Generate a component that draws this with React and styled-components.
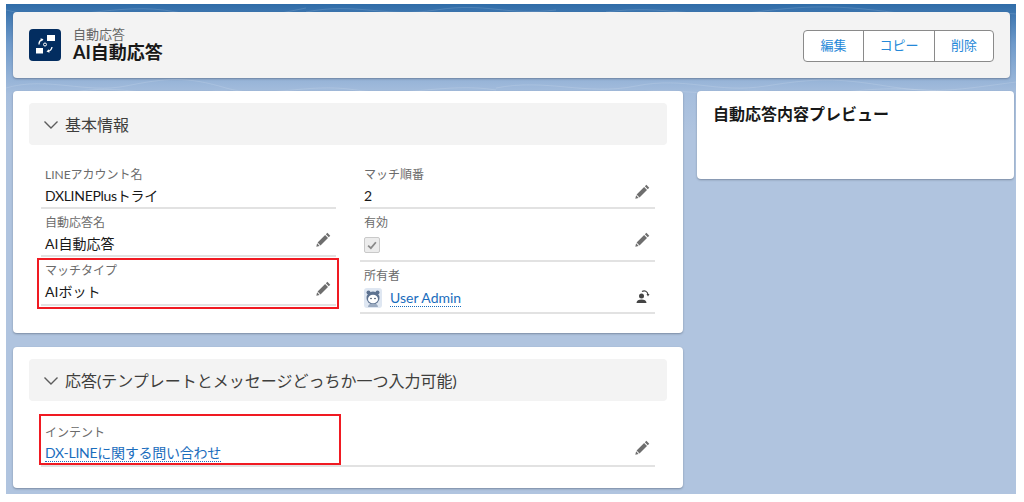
import React from "react"
import styled, { createGlobalStyle } from "styled-components"

const GlobalStyle = createGlobalStyle`
  html, body {
    margin: 0;
    padding: 0;
    height: 502px;
    overflow: hidden;
    background: #fff;
  }
  body {
    font-family: "Lato", "Noto Sans CJK JP", "Noto Sans", sans-serif;
    color: #181818;
  }
`

const Page = styled.div`
  position: relative;
  width: 1010px;
  height: 490px;
  margin: 4px 0 0 6px;
  padding: 8px 0 0 7px;
  box-sizing: border-box;
  overflow: hidden;
  background: linear-gradient(#2f6ca8 0, #6f9aca 40px, #a6bedd 90px, #b0c4df 130px);
  display: flex;
  flex-direction: column;
  gap: 13px;
`

const Contours = styled.svg`
  position: absolute;
  left: 0;
  top: 0;
`

const Card = styled.div`
  position: relative;
  background: ${(p) => p.$bg || "#fff"};
  border-radius: 4px;
  box-shadow: 0 1px 2px rgba(60, 70, 90, 0.45);
`

const Header = styled(Card)`
  width: 997px;
  height: 66px;
  padding: 0 16px;
  box-sizing: border-box;
  display: flex;
  align-items: center;
  justify-content: space-between;
`

const TitleArea = styled.div`
  display: flex;
  align-items: center;
  gap: 12px;
`

const LogoBox = styled.div`
  width: 32px;
  height: 32px;
  border-radius: 4px;
  background: #032d60;
  display: flex;
  align-items: center;
  justify-content: center;
`

const Titles = styled.div`
  display: flex;
  flex-direction: column;
`

const Crumb = styled.span`
  font-size: 13px;
  line-height: 14px;
  color: #666;
`

const Title = styled.span`
  font-size: 18px;
  line-height: 22px;
  font-weight: 700;
  color: #181818;
`

const ButtonGroup = styled.div`
  display: flex;
  height: 32px;
  margin-top: 2px;
  background: #fff;
  border: 1px solid #8a8a8a;
  border-radius: 4px;
  box-sizing: border-box;
`

const GroupButton = styled.button`
  width: ${(p) => p.$w}px;
  padding: 0 0 2px;
  border: 0;
  border-left: ${(p) => (p.$first ? "0" : "1px solid #8a8a8a")};
  background: transparent;
  color: #2488d8;
  font-family: inherit;
  font-size: 13px;
  line-height: 1;
`

const Columns = styled.div`
  position: relative;
  display: flex;
  align-items: flex-start;
  gap: 14px;
`

const MainColumn = styled.div`
  width: 670px;
  display: flex;
  flex-direction: column;
  gap: 14px;
`

const Panel = styled(Card)`
  padding: 12px 16px 0;
  box-sizing: border-box;
  height: ${(p) => p.$h}px;
`

const SectionBar = styled.div`
  height: 42px;
  padding: 0 15px;
  background: #f3f3f3;
  border-radius: 4px;
  display: flex;
  align-items: center;
  gap: 7px;
  font-size: 16px;
  color: #3e3e3c;
`

const FieldGrid = styled.div`
  display: grid;
  grid-template-columns: 295px 295px;
  column-gap: 24px;
  margin: 16px 0 0 12px;
`

const SingleField = styled.div`
  width: 614px;
  margin: 16px 0 0 12px;
`

const FieldStack = styled.div`
  display: flex;
  flex-direction: column;
`

const Field = styled.div`
  position: relative;
  height: ${(p) => p.$h || 48}px;
  padding: ${(p) => p.$pad || 6}px 4px 0 4px;
  box-sizing: border-box;
  border-bottom: 2px solid #e2e2e2;
`

const FieldLabel = styled.div`
  font-size: 12px;
  line-height: 16px;
  color: #6b6b6b;
`

const FieldValue = styled.div`
  display: flex;
  align-items: center;
  gap: 8px;
  height: 24px;
  margin-top: ${(p) => p.$drop || 0}px;
  font-size: 14px;
  letter-spacing: ${(p) => p.$track || 0}px;
  color: #181818;
`

const FieldLink = styled.a`
  font-size: 14px;
  color: #1a6dbd;
  border-bottom: 1px dotted #1a6dbd;
  line-height: 16px;
`

const FieldAction = styled.span`
  position: absolute;
  right: 5px;
  bottom: ${(p) => p.$bottom || 8}px;
  display: flex;
  color: #6e6e6e;
`

const Highlight = styled.div`
  position: absolute;
  left: ${(p) => p.$left}px;
  top: ${(p) => p.$top}px;
  width: ${(p) => p.$w}px;
  height: ${(p) => p.$h}px;
  border: 2px solid #f01a22;
  box-sizing: border-box;
  pointer-events: none;
`

const CheckBox = styled.span`
  width: 16px;
  height: 16px;
  box-sizing: border-box;
  background: #ececec;
  border: 1px solid #c9c9c9;
  border-radius: 2px;
  display: flex;
  align-items: center;
  justify-content: center;
`

const Avatar = styled.span`
  width: 18px;
  height: 20px;
  background: #dfe7f2;
  border-radius: 3px;
  display: flex;
  align-items: center;
  justify-content: center;
`

const PreviewCard = styled(Card)`
  width: 317px;
  height: 88px;
  padding: 13px 16px;
  box-sizing: border-box;
  font-size: 16px;
  line-height: 20px;
  font-weight: 700;
  color: #181818;
`

const Chevron = () => (
  <svg width="14" height="14" viewBox="0 0 14 14" fill="none" stroke="#5c5c5c" strokeWidth="1.4">
    <path d="M0.500 4.500 7 11 13.500 4.500" />
  </svg>
)

const Pencil = () => (
  <svg width="15" height="15" viewBox="0 0 14 14" fill="currentColor">
    <path d="M10.600 0.700 13.300 3.400 11.900 4.800 9.200 2.100Z" />
    <path d="M8.500 2.800 11.200 5.500 4.200 12.500 1.500 9.800Z" />
    <path d="M1 10.600 3.400 13 0.300 13.700Z" />
  </svg>
)

const ChangeOwner = () => (
  <svg width="14" height="15" viewBox="0 0 14 15" fill="#444">
    <circle cx="5.500" cy="7" r="2.500" />
    <path d="M0.500 14c0-2.600 2.200-3.600 5-3.600s5 1 5 3.600Z" />
    <path d="M6 2.600C8.500 0.800 11.500 2.400 12 5.500" fill="none" stroke="#444" strokeWidth="1.200" />
    <path d="M10.500 5h3L12 7.500Z" />
  </svg>
)

const AppLogo = () => (
  <svg width="22" height="22" viewBox="0 0 22 22" fill="#fff">
    <rect x="13" y="1" width="8" height="6" />
    <rect x="2" y="14" width="7" height="5.500" />
    <circle cx="11" cy="10.500" r="1.500" fill="none" stroke="#fff" strokeWidth="1" />
    <path d="M8.500 5.500C6.500 6 5 8 5 10.500" fill="none" stroke="#fff" strokeWidth="1.300" />
    <path d="M6.500 4.200 9.500 5.300 7.500 7.500Z" />
    <path d="M18 13c-0.300 2-2 3.800-4 4.200" fill="none" stroke="#fff" strokeWidth="1.300" />
    <path d="M15.500 18.800 12.500 17.400 14.800 15.300Z" />
  </svg>
)

const BotAvatar = () => (
  <svg width="16" height="18" viewBox="0 0 16 18">
    <circle cx="3.500" cy="3.500" r="2" fill="#5d7290" />
    <circle cx="12.500" cy="3.500" r="2" fill="#5d7290" />
    <circle cx="8" cy="9" r="6.500" fill="#5d7290" />
    <ellipse cx="8" cy="10" rx="5" ry="4.300" fill="#fff" />
    <circle cx="6" cy="9.500" r="0.800" fill="#33435c" />
    <circle cx="10" cy="9.500" r="0.800" fill="#33435c" />
    <path d="M3 18c0-2.500 2-3.500 5-3.500s5 1 5 3.500Z" fill="#9aaac0" />
  </svg>
)

const EditableField = ({ label, value, h, drop, actionBottom }) => (
  <Field $h={h}>
    <FieldLabel>{label}</FieldLabel>
    <FieldValue $drop={drop}>{value}</FieldValue>
    <FieldAction $bottom={actionBottom}><Pencil /></FieldAction>
  </Field>
)

export default function App() {
  return (
    <>
      <GlobalStyle />
      <Page>
        <Contours width="1010" height="100" viewBox="0 0 1010 100" fill="none" stroke="#fff" strokeOpacity="0.13">
          <path d="M0 6C60 22 110 -4 170 8s90 4 130 -4" />
          <path d="M300 8c50 -10 80 6 130 -2s70 6 120 0" />
          <path d="M600 8c60 -8 90 8 150 0s90 -6 150 2 70 -4 110 0" />
          <path d="M0 84c40 -12 80 6 120 -2s60 -10 100 2 80 -6 130 2 90 -8 140 0" />
          <path d="M490 84c50 -10 90 8 140 -2s80 8 130 0 70 -8 120 0 70 4 130 -4" />
          <path d="M60 90c30 -8 60 -4 90 0s50 -6 80 -2 60 6 100 0" />
          <path d="M620 90c40 -8 70 2 110 -2s60 6 110 0 60 -2 120 0" />
        </Contours>
        <Header $bg="#f3f3f3">
          <TitleArea>
            <LogoBox><AppLogo /></LogoBox>
            <Titles>
              <Crumb>自動応答</Crumb>
              <Title>AI自動応答</Title>
            </Titles>
          </TitleArea>
          <ButtonGroup>
            <GroupButton $first $w={59}>編集</GroupButton>
            <GroupButton $w={71}>コピー</GroupButton>
            <GroupButton $w={59}>削除</GroupButton>
          </ButtonGroup>
        </Header>
        <Columns>
          <MainColumn>
            <Panel $h={242}>
              <SectionBar><Chevron />基本情報</SectionBar>
              <FieldGrid>
                <FieldStack>
                  <Field>
                    <FieldLabel>LINEアカウント名</FieldLabel>
                    <FieldValue $track={-0.3}>DXLINEPlusトライ</FieldValue>
                  </Field>
                  <EditableField label="自動応答名" value="AI自動応答" />
                  <EditableField label="マッチタイプ" value="AIボット" h={49} />
                </FieldStack>
                <FieldStack>
                  <EditableField label="マッチ順番" value="2" />
                  <EditableField
                    label="有効"
                    h={53}
                    drop={2}
                    actionBottom={13}
                    value={
                      <CheckBox>
                        <svg width="10" height="10" viewBox="0 0 9 9" fill="none" stroke="#8a8a8a" strokeWidth="1.600">
                          <path d="M1 5 3.500 7.300 8 2" />
                        </svg>
                      </CheckBox>
                    }
                  />
                  <Field $h={52}>
                    <FieldLabel>所有者</FieldLabel>
                    <FieldValue $drop={2}>
                      <Avatar><BotAvatar /></Avatar>
                      <FieldLink>User Admin</FieldLink>
                    </FieldValue>
                    <FieldAction><ChangeOwner /></FieldAction>
                  </Field>
                </FieldStack>
              </FieldGrid>
              <Highlight $left={24} $top={167} $w={302} $h={51} />
            </Panel>
            <Panel $h={141}>
              <SectionBar><Chevron />応答(テンプレートとメッセージどっちか一つ入力可能)</SectionBar>
              <SingleField>
                <Field $h={50} $pad={8} >
                  <FieldLabel>インテント</FieldLabel>
                  <FieldValue $track={-0.25}>
                    <FieldLink>DX-LINEに関する問い合わせ</FieldLink>
                  </FieldValue>
                  <FieldAction $bottom={10}><Pencil /></FieldAction>
                </Field>
              </SingleField>
              <Highlight $left={26} $top={67} $w={302} $h={51} />
            </Panel>
          </MainColumn>
          <PreviewCard>自動応答内容プレビュー</PreviewCard>
        </Columns>
      </Page>
    </>
  )
}
